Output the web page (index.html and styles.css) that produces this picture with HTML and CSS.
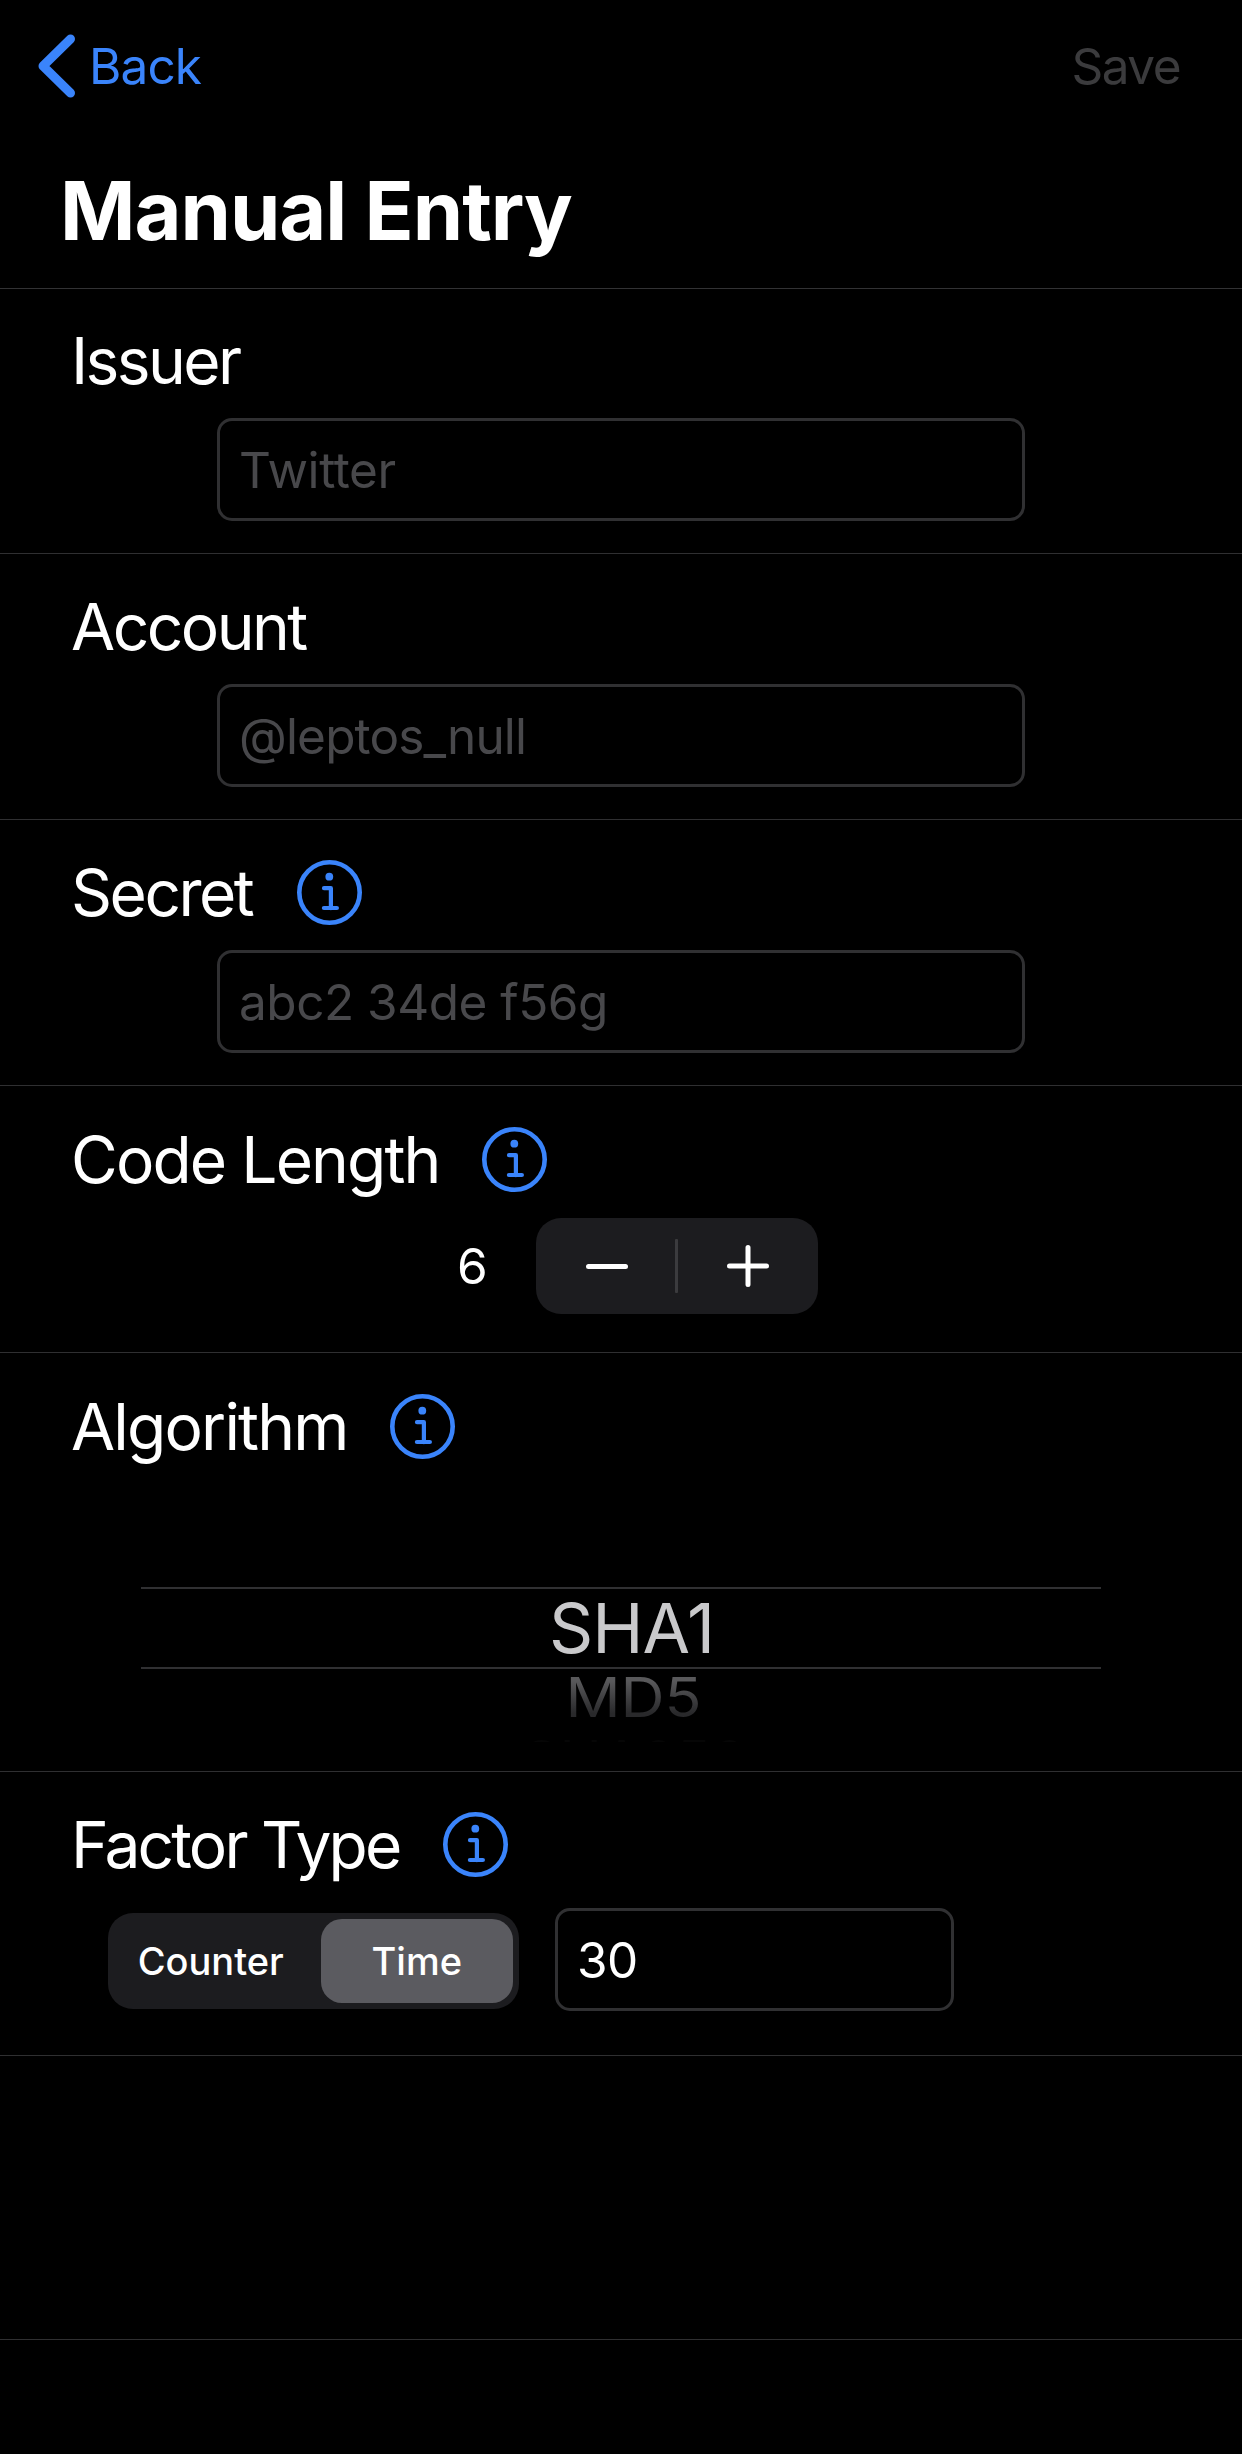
FILE: index.html
```html
<!DOCTYPE html>
<html lang="en">
<head>
<meta charset="utf-8">
<title>Manual Entry</title>
<link rel="stylesheet" href="styles.css">
</head>
<body>
<svg class="sprite" aria-hidden="true">
  <symbol id="info" viewBox="0 0 65 65">
    <circle cx="32.5" cy="32.5" r="30.2" fill="none" stroke="currentColor" stroke-width="4.6"/>
    <circle cx="32.3" cy="16.7" r="3.9" fill="currentColor"/>
    <path d="M27 28.2h6.9v20M26.9 48h13" fill="none" stroke="currentColor" stroke-width="4.2" stroke-linecap="round" stroke-linejoin="round"/>
  </symbol>
</svg>
<header class="header">
  <nav class="nav">
    <a class="back">
      <svg class="chevron" viewBox="0 0 38 64"><path d="M32.5 5 5 32l27.5 27" fill="none" stroke="currentColor" stroke-width="9" stroke-linecap="round" stroke-linejoin="round"/></svg>
      <span class="back-text">Back</span>
    </a>
    <span class="save">Save</span>
  </nav>
  <h1 class="title">Manual Entry</h1>
</header>
<main>
  <section class="row row-issuer">
    <div class="heading"><h2 class="label label-issuer">Issuer</h2></div>
    <div class="field"><span class="hint hint-issuer">Twitter</span></div>
  </section>
  <section class="row">
    <div class="heading"><h2 class="label label-account">Account</h2></div>
    <div class="field"><span class="hint hint-account">@leptos_null</span></div>
  </section>
  <section class="row">
    <div class="heading"><h2 class="label label-secret">Secret</h2><svg class="info"><use href="#info"/></svg></div>
    <div class="field"><span class="hint hint-secret">abc2 34de f56g</span></div>
  </section>
  <section class="row row-length">
    <div class="heading"><h2 class="label label-length">Code Length</h2><svg class="info"><use href="#info"/></svg></div>
    <div class="length">
      <span class="count">6</span>
      <div class="stepper">
        <svg class="step minus" viewBox="0 0 42 42"><path d="M2.5 21.5h37"/></svg>
        <span class="divider"></span>
        <svg class="step" viewBox="0 0 42 42"><path d="M2.5 21h37M21 2.5v37"/></svg>
      </div>
    </div>
  </section>
  <section class="row row-algorithm">
    <div class="heading"><h2 class="label label-algorithm">Algorithm</h2><svg class="info"><use href="#info"/></svg></div>
    <div class="picker">
      <div class="option chosen">SHA1</div>
      <div class="option next">MD5</div>
      <div class="option last">SHA256</div>
    </div>
  </section>
  <section class="row row-factor">
    <div class="heading"><h2 class="label label-factor">Factor Type</h2><svg class="info"><use href="#info"/></svg></div>
    <div class="factor">
      <div class="segments"><span class="segment">Counter</span><span class="segment selected">Time</span></div>
      <div class="field field-period"><span>30</span></div>
    </div>
  </section>
  <section class="row row-empty"></section>
</main>
</body>
</html>
```
FILE: styles.css
```css
* { box-sizing: border-box; }
body {
  margin: 0;
  min-height: 2454px;
  background: #000;
  color: #fff;
  font-family: Inter, "Liberation Sans", sans-serif;
  font-size: 49.5px;
}
h1, h2 { margin: 0; font-weight: 400; white-space: nowrap; }
.sprite { display: none; }

.header { height: 289px; border-bottom: 1px solid #323234; }
.nav {
  display: flex;
  align-items: center;
  justify-content: space-between;
  height: 132px;
  padding: 0 62px 0 38px;
}
.back { display: flex; align-items: center; gap: 13px; color: #3a84fb; }
.chevron { width: 38px; height: 64px; }
.back-text { letter-spacing: -0.9px; }
.save { color: #3b3b3d; letter-spacing: -1.5px; }
.title {
  padding: 1px 0 0 60px;
  font-size: 81px;
  font-weight: 700;
  line-height: 156px;
  letter-spacing: -1px;
}

.row { height: 266px; padding-top: 40px; border-bottom: 1px solid #2f2f31; }
.row-issuer { height: 265px; padding-top: 39px; }
.row-length { height: 267px; padding-top: 41px; }
.row-algorithm { height: 419px; padding-top: 41px; }
.row-factor, .row-empty { height: 284px; }

.heading { display: flex; align-items: center; gap: 45px; height: 65px; padding-left: 71px; }
.label { font-size: 64px; line-height: 65px; }
.label-issuer { letter-spacing: -2.6px; }
.label-account { letter-spacing: -2.5px; }
.label-secret { width: 181px; letter-spacing: -2.5px; }
.label-length { width: 366px; letter-spacing: -1.86px; }
.label-algorithm { width: 274px; letter-spacing: -1.8px; }
.label-factor { width: 327px; letter-spacing: -2.8px; }
.info { width: 65px; height: 65px; color: #3a84fb; }

.field {
  display: flex;
  align-items: center;
  width: 808px;
  height: 103px;
  margin: 25px auto 0;
  padding-left: 19px;
  border: 3px solid #303032;
  border-radius: 15px;
}
.hint { color: #48484b; white-space: nowrap; }
.hint-issuer { letter-spacing: -0.4px; }
.hint-account { letter-spacing: -0.84px; }
.hint-secret { letter-spacing: -0.48px; }

.length { display: flex; align-items: center; gap: 47px; margin: 26px 0 0 457px; }
.count { width: 32px; }
.stepper {
  display: grid;
  grid-template-columns: 139px 3px 140px;
  align-items: center;
  justify-items: center;
  width: 282px;
  height: 96px;
  border-radius: 25px;
  background: #1c1c1f;
}
.step { width: 42px; height: 42px; fill: none; stroke: #fff; stroke-width: 5; stroke-linecap: round; }
.minus { margin-left: 3px; }
.divider { width: 3px; height: 54px; background: #3b3b3e; border-radius: 1px; }

.picker { width: 960px; height: 155px; margin: 128px 0 0 141px; overflow: hidden; }
.option { text-align: center; white-space: nowrap; }
.chosen {
  height: 82px;
  padding-left: 21px;
  border-top: 2px solid #303032;
  border-bottom: 2px solid #303032;
  color: #c9c9cb;
  font-size: 69px;
  line-height: 79px;
  letter-spacing: -0.94px;
}
.next {
  height: 56px;
  padding-left: 25px;
  background: linear-gradient(#59595b 10px, #29292b 46px) text;
  color: transparent;
  font-size: 61px;
  line-height: 56px;
  transform: scaleY(.9);
}
.last {
  height: 60px;
  padding: 3px 0 0 27px;
  color: #060606;
  font-size: 57px;
  line-height: 68px;
}

.factor { display: flex; align-items: center; gap: 36px; margin: 31px 0 0 108px; }
.segments {
  display: grid;
  grid-template-columns: 1fr 1fr;
  width: 411px;
  height: 96px;
  margin-top: 2px;
  border-radius: 25px;
  background: #1c1c1f;
  font-size: 38px;
  font-weight: 450;
}
.segment { display: flex; align-items: center; justify-content: center; }
.selected { margin: 6px 6px 6px 7px; border-radius: 21px; background: #5b5b60; font-weight: 500; }
.field-period { width: 399px; margin: 0; letter-spacing: -0.57px; }
```
